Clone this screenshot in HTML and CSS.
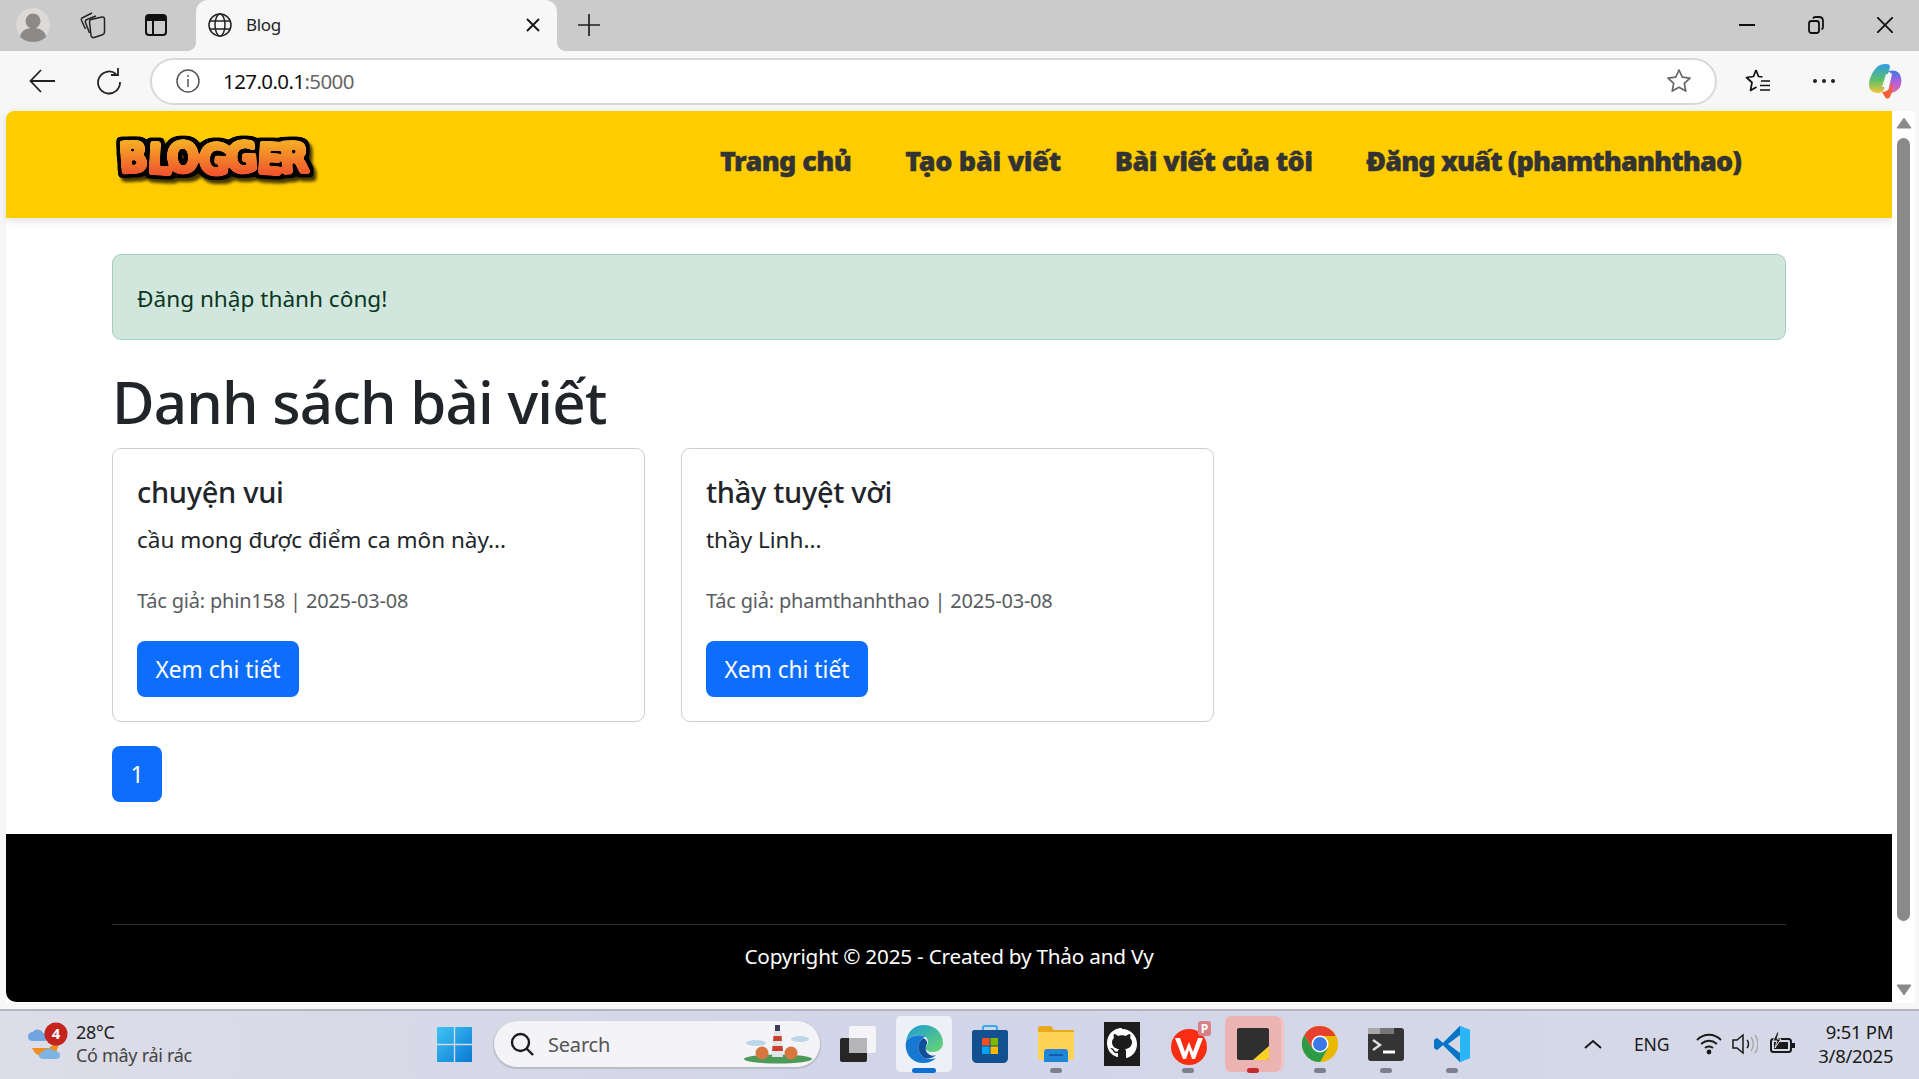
FILE: index.html
```html
<!DOCTYPE html>
<html lang="vi">

<head>
    <meta charset="UTF-8">
    <meta name="viewport" content="width=device-width, initial-scale=1.0">
    <title>Blog</title>
    <link rel="stylesheet" href="styles.css">
</head>

<body>
    <div class="tabstrip">
        <svg class="profile" width="34" height="34" viewBox="0 0 34 34">
            <circle cx="17" cy="17" r="17" fill="#dcdad8" />
            <circle cx="17" cy="13" r="7.5" fill="#8c8a88" />
            <path d="M4 29c1-7 7-9 13-9s12 2 13 9c-3 3-8 5-13 5s-10-2-13-5z" fill="#8c8a88" />
        </svg>
        <svg class="strip-icon" width="26" height="28" viewBox="0 0 26 28" fill="none" stroke="#222" stroke-width="1.5" stroke-linejoin="round">
            <path d="M11 8.500 22 6c1.500-.3 2.500.4 2.500 2v13c0 1.500-.6 2.300-2 2.700L14 26.500c-1.500.4-2.500-.3-3-1.800L9.500 11c0-1.500.3-2.200 1.500-2.500z" />
            <path d="M9.500 22 5.500 11.500c-.5-1.500 0-2.500 1.500-3L16 5" />
            <path d="M5.500 18 1.500 9.500C1 8 1.500 7 3 6.500L12 2" />
        </svg>
        <svg class="strip-icon" width="22" height="24" viewBox="0 0 22 24" fill="none" stroke="#111" stroke-width="2">
            <rect x="1" y="2" width="20" height="20" rx="3" />
            <path d="M1 5.500h20" stroke-width="5" />
            <path d="M8 8v14" />
        </svg>
        <div class="tab">
            <svg width="24" height="24" viewBox="0 0 24 24" fill="none" stroke="#222" stroke-width="1.500">
                <circle cx="12" cy="12" r="11" />
                <ellipse cx="12" cy="12" rx="5" ry="11" />
                <path d="M2 8h20M2 16h20" />
            </svg>
            <span class="tab-title">Blog</span>
            <svg class="tab-close" width="14" height="14" viewBox="0 0 14 14" stroke="#111" stroke-width="1.800">
                <path d="M1 1l12 12M13 1 1 13" />
            </svg>
        </div>
        <svg class="tab-plus" width="22" height="22" viewBox="0 0 22 22" stroke="#222" stroke-width="1.700">
            <path d="M11 0v22M0 11h22" />
        </svg>
        <div class="window-btns">
            <svg width="16" height="16" viewBox="0 0 16 16" stroke="#111" stroke-width="2">
                <path d="M0 8h16" />
            </svg>
            <svg width="16" height="18" viewBox="0 0 16 18" fill="none" stroke="#111" stroke-width="1.800">
                <rect x="1" y="5" width="10" height="12" rx="2.500" />
                <path d="M5 2.500C5.500 1.500 6.500 1 7.500 1H11c2.500 0 4 1.500 4 4v6c0 1-.5 2-1.500 2.500" />
            </svg>
            <svg width="16" height="16" viewBox="0 0 16 16" stroke="#111" stroke-width="1.800">
                <path d="M0 0l16 16M16 0 0 16" />
            </svg>
        </div>
    </div>

    <div class="toolbar">
        <svg class="tool-back" width="26" height="24" viewBox="0 0 26 24" fill="none" stroke="#222" stroke-width="1.800">
            <path d="M26 12H2M12 1 1.500 12 12 23" />
        </svg>
        <svg class="tool-reload" width="26" height="28" viewBox="0 0 26 28" fill="none" stroke="#222" stroke-width="1.800">
            <path d="M20 7a11 11 0 1 0 4 8" />
            <path d="M22 1v7h-7" />
        </svg>
        <div class="address">
            <svg width="24" height="24" viewBox="0 0 24 24" fill="none" stroke="#555" stroke-width="1.500">
                <circle cx="12" cy="12" r="11" />
                <path d="M12 10v8M12 6v2" />
            </svg>
            <span class="url">127.0.0.1<span class="url-port">:5000</span></span>
            <svg class="star" width="26" height="26" viewBox="0 0 26 26" fill="none" stroke="#666" stroke-width="1.700" stroke-linejoin="round">
                <path d="M13 2l3.300 7.200 7.700.9-5.700 5.300 1.500 7.700L13 19.300l-6.800 3.800 1.500-7.700L2 10.100l7.700-.9z" />
            </svg>
        </div>
        <svg class="tool-fav" width="26" height="26" viewBox="0 0 26 26" fill="none" stroke="#111" stroke-width="1.700" stroke-linejoin="round">
            <path d="M11 2l2.500 6.500 4 .5M11 2 8.500 8.500 1.500 9.500l5.500 5-1.500 8 6-3.500" />
            <path d="M16 13h9M15 17.500h10M15 22h10" />
        </svg>
        <div class="tool-more"><i></i><i></i><i></i></div>
        <svg class="tool-copilot" width="34" height="36" viewBox="0 0 34 36">
            <defs>
                <linearGradient id="copA" x1="0" y1="0" x2="0" y2="1">
                    <stop offset="0" stop-color="#2f9be8" />
                    <stop offset=".55" stop-color="#5cc06a" />
                    <stop offset="1" stop-color="#f2c53a" />
                </linearGradient>
                <linearGradient id="copB" x1="0" y1="0" x2="0" y2="1">
                    <stop offset="0" stop-color="#3a7be0" />
                    <stop offset=".5" stop-color="#b25ee0" />
                    <stop offset="1" stop-color="#e56a9c" />
                </linearGradient>
            </defs>
            <path d="M9 4c2-2 5-3 9-3 3 0 4 1 4 3L16 26c-1 3-3 4-6 4-5 0-9-3-9-8 0-7 4-14 8-18z" fill="url(#copA)" />
            <path d="M20 8c4-1 8-1 11 2 2 3 3 7 2 11-1 5-5 8-10 9l-3-1 4-18z" fill="url(#copB)" />
            <path d="M14 29c3 0 5-1 7-3l3-7c1 5 0 11-2 15-1 2-4 2-5 0z" fill="#f0603a" />
            <path d="M18 11l-4 13h3l4-13z" fill="#fff" opacity=".9" />
        </svg>
    </div>

    <div class="viewport">
        <div class="page">
            <nav class="topbar">
                <svg class="logo" width="216" height="64" viewBox="0 0 216 64">
                    <defs>
                        <linearGradient id="logoFill" gradientUnits="userSpaceOnUse" x1="0" y1="14" x2="0" y2="48">
                            <stop offset="0" stop-color="#f5ab25" />
                            <stop offset="1" stop-color="#f0502e" />
                        </linearGradient>
                        <filter id="logoBubble" x="-5%" y="-20%" width="110%" height="150%" color-interpolation-filters="sRGB">
                            <feGaussianBlur in="SourceGraphic" stdDeviation="1" result="soft" />
                            <feComponentTransfer in="soft" result="body">
                                <feFuncA type="linear" slope="6" intercept="-1.500" />
                            </feComponentTransfer>
                            <feMorphology in="body" operator="dilate" radius="2.600" result="fat" />
                            <feGaussianBlur in="fat" stdDeviation="0.800" result="fatSoft" />
                            <feColorMatrix in="fatSoft" type="matrix" values="0 0 0 0 0  0 0 0 0 0  0 0 0 0 0  0 0 0 5 -1.200" result="outline" />
                            <feOffset in="outline" dx="3" dy="4" result="moved" />
                            <feGaussianBlur in="moved" stdDeviation="1.600" result="blurred" />
                            <feColorMatrix in="blurred" type="matrix" values="0 0 0 0 .2  0 0 0 0 .16  0 0 0 0 0  0 0 0 .9 0" result="shadow" />
                            <feMerge>
                                <feMergeNode in="shadow" />
                                <feMergeNode in="outline" />
                                <feMergeNode in="body" />
                            </feMerge>
                        </filter>
                    </defs>
                    <text class="logo-text" x="9" y="45" rotate="-4 3 -3 4 -3 3 -2" fill="url(#logoFill)" stroke="url(#logoFill)" filter="url(#logoBubble)">BLOGGER</text>
                </svg>
                <div class="nav-links">
                    <a href="#">Trang chủ</a>
                    <a class="nav-wide" href="#">Tạo bài viết</a>
                    <a href="#">Bài viết của tôi</a>
                    <a class="nav-tight" href="#">Đăng xuất (phamthanhthao)</a>
                </div>
            </nav>

            <main class="container">
                <div class="alert">Đăng nhập thành công!</div>
                <h1>Danh sách bài viết</h1>
                <div class="cards">
                    <div class="card">
                        <h5>chuyện vui</h5>
                        <p class="card-text">cầu mong được điểm ca môn này...</p>
                        <p class="card-meta">Tác giả: phin158 | 2025-03-08</p>
                        <a class="btn" href="#">Xem chi tiết</a>
                    </div>
                    <div class="card">
                        <h5>thầy tuyệt vời</h5>
                        <p class="card-text">thầy Linh...</p>
                        <p class="card-meta">Tác giả: phamthanhthao | 2025-03-08</p>
                        <a class="btn" href="#">Xem chi tiết</a>
                    </div>
                </div>
                <a class="page-num" href="#">1</a>
            </main>

            <footer class="footer">
                <div class="footer-inner">Copyright © 2025 - Created by Thảo and Vy</div>
            </footer>
        </div>
        <div class="scrollbar">
            <svg width="16" height="12" viewBox="0 0 16 12"><path d="M8 1l7 10H1z" fill="#8a8a8a" stroke="#8a8a8a" stroke-linejoin="round" /></svg>
            <div class="scroll-thumb"></div>
            <svg width="16" height="12" viewBox="0 0 16 12"><path d="M8 11l7-10H1z" fill="#8a8a8a" stroke="#8a8a8a" stroke-linejoin="round" /></svg>
        </div>
    </div>

    <div class="taskbar">
        <div class="weather">
            <svg width="42" height="44" viewBox="0 0 42 44">
                <path d="M5 26c4 10 16 12 24 5l3-9-4-1-6 5z" fill="#ef8f22" />
                <path d="M1 15c0-3 2-5 5-5 1-3 8-4 10 1 3 0 5 2 5 4s-2 4-4 4H5c-2 0-4-2-4-4z" fill="#6fa6df" />
                <path d="M12 34c0-3 2-4 4-4 1-4 9-5 11-1 3 0 6 1 6 4s-2 4-5 4H16c-2 0-4-1-4-3z" fill="#7db4e6" />
                <circle cx="29" cy="12" r="11.500" fill="#c4241f" />
                <text class="weather-badge" x="29" y="17" text-anchor="middle">4</text>
            </svg>
            <div class="weather-text">
                <span class="temp">28°C</span>
                <span class="sky">Có mây rải rác</span>
            </div>
        </div>
        <svg class="win-logo" width="35" height="35" viewBox="0 0 35 35">
            <defs>
                <linearGradient id="winFill" x1="0" y1="0" x2="1" y2="1">
                    <stop offset="0" stop-color="#3ec5f2" />
                    <stop offset="1" stop-color="#0b78d6" />
                </linearGradient>
            </defs>
            <path d="M0 0h16.800v16.800H0zM18.200 0H35v16.800H18.200zM0 18.200h16.800V35H0zM18.200 18.200H35V35H18.200z" fill="url(#winFill)" />
        </svg>
        <div class="search">
            <svg width="24" height="24" viewBox="0 0 24 24" fill="none" stroke="#1a1a1a" stroke-width="2.400">
                <circle cx="10.500" cy="10.500" r="8.500" />
                <path d="M16.500 16.500 23 23" />
            </svg>
            <span class="search-label">Search</span>
            <svg class="search-art" width="72" height="40" viewBox="0 0 72 40">
                <ellipse cx="14" cy="19" rx="10" ry="3" fill="#bcd6ea" />
                <ellipse cx="58" cy="15" rx="9" ry="3" fill="#bcd6ea" />
                <ellipse cx="36" cy="35" rx="34" ry="4.500" fill="#4d9a58" />
                <circle cx="20" cy="29" r="6.500" fill="#d8763f" />
                <circle cx="49" cy="29" r="6.500" fill="#d8763f" />
                <path d="M32 7h7l2 26H30z" fill="#e3e3e8" />
                <path d="M31.500 12h8l.5 5h-9zM30.500 22h10l.5 5H30z" fill="#c8412f" />
                <path d="M33 1h5v6h-5z" fill="#3a3f58" />
            </svg>
        </div>
        <div class="apps">
            <div class="app">
                <svg width="36" height="36" viewBox="0 0 36 36">
                    <rect x="0" y="12" width="27" height="24" rx="2" fill="#262626" />
                    <rect x="9" y="0" width="27" height="27" rx="2" fill="#f4f4f8" />
                    <rect x="9" y="12" width="18" height="15" fill="#b5b5b8" />
                </svg>
            </div>
            <div class="app app-active">
                <svg width="38" height="38" viewBox="0 0 38 38">
                    <defs>
                        <linearGradient id="edgeTop" x1="0" y1="0" x2="1" y2="1">
                            <stop offset="0" stop-color="#1a9ad8" />
                            <stop offset="1" stop-color="#6bd86c" />
                        </linearGradient>
                    </defs>
                    <path d="M1 17C2 7 9 0 19 0c11 0 19 8 19 18 0 6-5 9-10 9-4 0-8-2-8-4 0-2 3-2 3-6s-4-7-8-7C8 10 2 13 1 17z" fill="url(#edgeTop)" />
                    <path d="M1 17c-2 11 6 21 17 21 5 0 9-1 13-5-6 2-11 1-14-2-5-5-5-13 1-18 1-1 2-2 3-2-8-2-18 0-20 6z" fill="#1778d2" />
                    <path d="M17 31c-5-5-5-13 1-18 3 1 5 4 4 6-3 4-1 9 3 11 2 1 4 1 6 0-4 4-10 5-14 1z" fill="#0f4f9c" />
                </svg>
                <i class="app-bar"></i>
            </div>
            <div class="app">
                <svg width="36" height="38" viewBox="0 0 36 38">
                    <path d="M11 6V3c0-1 1-2 2-2h10c1 0 2 1 2 2v3" fill="none" stroke="#38a8ea" stroke-width="2" />
                    <path d="M2 5h32c1 0 2 1 2 2v26c0 3-2 5-5 5H5c-3 0-5-2-5-5V7c0-1 1-2 2-2z" fill="#12508f" />
                    <path d="M10 13h7.500v7.500H10z" fill="#f25022" />
                    <path d="M18.500 13H26v7.500h-7.500z" fill="#7fba00" />
                    <path d="M10 21.500h7.500V29H10z" fill="#00a4ef" />
                    <path d="M18.500 21.500H26V29h-7.500z" fill="#ffb900" />
                </svg>
            </div>
            <div class="app">
                <svg width="36" height="36" viewBox="0 0 36 36">
                    <path d="M0 2c0-1 1-2 2-2h11l3 4h20v28H0z" fill="#e8a91c" />
                    <path d="M0 6h36v26c0 1-1 2-2 2H2c-1 0-2-1-2-2z" fill="#ffd355" />
                    <path d="M6 36V26c0-2 1-3 3-3h18c2 0 3 1 3 3v10z" fill="#1f86d8" />
                    <path d="M11 29h14" stroke="#0e5fa8" stroke-width="2" />
                </svg>
                <i class="app-dot"></i>
            </div>
            <div class="app">
                <svg width="36" height="44" viewBox="0 0 36 44">
                    <rect width="36" height="44" fill="#1d1c1c" />
                    <path d="M18 6C9 6 3 13 3 21c0 7 4 12 10 14 1 0 1-.5 1-1v-3c-4 1-5-2-5-2-1-2-2-2-2-2-1-1 0-1 0-1 2 0 3 2 3 2 1 2 3 2 4 1 0-1 1-2 1-2-3 0-7-2-7-7 0-2 1-3 2-4 0 0-1-2 0-4 0 0 2 0 4 2 2-1 6-1 8 0 2-2 4-2 4-2 1 2 0 4 0 4 1 1 2 2 2 4 0 5-4 7-7 7 1 1 1 2 1 3v5c0 .5 0 1 1 1 6-2 10-7 10-14 0-8-6-15-15-15z" fill="#fff" />
                </svg>
            </div>
            <div class="app app-wps">
                <svg width="40" height="46" viewBox="0 0 40 46">
                    <circle cx="18" cy="26" r="18" fill="#fa2d12" />
                    <path d="M4 17h5l5 14 4-10 4 10 5-14h5l-8 21h-3l-3-9-3 9h-3z" fill="#fff" />
                    <rect x="27" y="0" width="13" height="15" rx="3" fill="#d88088" />
                    <text class="wps-badge" x="33.500" y="12" text-anchor="middle">P</text>
                </svg>
                <i class="app-dot"></i>
            </div>
            <div class="app app-flagged">
                <svg width="32" height="32" viewBox="0 0 32 32">
                    <rect width="32" height="32" rx="2" fill="#2f2f2f" />
                    <path d="M32 18v12c0 1-1 2-2 2H16z" fill="#f8d326" />
                </svg>
                <i class="app-dot app-dot-red"></i>
            </div>
            <div class="app">
                <svg width="36" height="36" viewBox="0 0 36 36">
                    <circle cx="18" cy="18" r="18" fill="#e8b900" />
                    <path d="M18 0A18 18 0 0 0 2.400 9l7.800 13.500L18 10h15.600A18 18 0 0 0 18 0z" fill="#e8402e" />
                    <path d="M2.400 9A18 18 0 0 0 18 36l7.800-13.500-15.600 0z" fill="#2c9a47" />
                    <circle cx="18" cy="18" r="8.500" fill="#fff" />
                    <circle cx="18" cy="18" r="7" fill="#3a78e6" />
                </svg>
                <i class="app-dot"></i>
            </div>
            <div class="app">
                <svg width="36" height="33" viewBox="0 0 36 33">
                    <rect width="36" height="33" rx="3" fill="#343434" />
                    <path d="M0 3c0-2 1-3 3-3h9v6H0z" fill="#a8a8a8" />
                    <path d="M12 0h14v6H12z" fill="#777" />
                    <path d="M5 12l7 5-7 5" fill="none" stroke="#ddd" stroke-width="2.400" />
                    <path d="M15 24h12" stroke="#fff" stroke-width="3" />
                </svg>
                <i class="app-dot"></i>
            </div>
            <div class="app">
                <svg width="36" height="36" viewBox="0 0 36 36">
                    <path d="M26 0 9 17 3 12l-3 2v8l3 2 6-5 17 17 10-4V4z" fill="#1f9cf0" />
                    <path d="M26 0v36L9 19 3 24l-3-2v-8l3-2 6 5z" fill="#0a74c4" />
                    <path d="M26 9v18L14 18z" fill="#d5d8e6" />
                    <path d="M26 0l10 4v28l-10 4z" fill="#29b6f6" />
                </svg>
                <i class="app-dot"></i>
            </div>
        </div>
        <div class="tray">
            <svg width="18" height="10" viewBox="0 0 18 10" fill="none" stroke="#1a1a1a" stroke-width="2">
                <path d="M1 9l8-7 8 7" />
            </svg>
            <span class="lang">ENG</span>
            <svg class="tray-wifi" width="26" height="22" viewBox="0 0 26 22" fill="none" stroke="#1a1a1a" stroke-width="1.800">
                <path d="M1 7c7-7 17-7 24 0M5 11c5-4 11-4 16 0M9 15c2-2 6-2 8 0" />
                <circle cx="13" cy="19" r="1.500" fill="#1a1a1a" />
            </svg>
            <svg class="tray-sound" width="26" height="22" viewBox="0 0 26 22" fill="none" stroke="#1a1a1a" stroke-width="1.500">
                <path d="M1 7h4l6-5v18l-6-5H1z" />
                <path d="M15 7c2 2 2 6 0 8" />
                <path d="M19 4c3 4 3 10 0 14M23 2c4 5 4 13 0 18" stroke="#aaa" />
            </svg>
            <svg class="tray-battery" width="25" height="24" viewBox="0 0 25 24">
                <rect x="1" y="7" width="20" height="13" rx="2.500" fill="none" stroke="#1a1a1a" stroke-width="2" />
                <rect x="4" y="10" width="14" height="7" fill="#1a1a1a" />
                <rect x="22" y="11" width="3" height="5" fill="#1a1a1a" />
                <path d="M7 0 3 9h4l-2 7 6-9H7l2-7z" fill="#1a1a1a" stroke="#d5d8e6" />
            </svg>
            <div class="clock">
                <span>9:51 PM</span>
                <span>3/8/2025</span>
            </div>
        </div>
    </div>
</body>

</html>
```

FILE: styles.css
```css
* {
    box-sizing: border-box;
}

html,
body {
    margin: 0;
    height: 1079px;
    overflow: hidden;
}

body {
    display: flex;
    flex-direction: column;
    background-color: #f7f7f7;
    font-family: "Noto Sans", "Liberation Sans", sans-serif;
    color: #212529;
}

/* browser chrome */
.tabstrip {
    flex: none;
    display: flex;
    align-items: center;
    height: 51px;
    padding: 0 0 2px 16px;
    background-color: #cbcbcb;
}

.strip-icon {
    margin-left: 30px;
}

.strip-icon + .strip-icon {
    margin-left: 39px;
}

.tab {
    position: relative;
    display: flex;
    align-items: center;
    align-self: flex-end;
    width: 361px;
    height: 51px;
    margin: 0 0 -2px 29px;
    padding: 0 17px 2px 12px;
    background-color: #f7f7f7;
    border-radius: 12px 12px 0 0;
}

.tab::before,
.tab::after {
    content: "";
    position: absolute;
    bottom: 0;
    width: 8px;
    height: 8px;
}

.tab::before {
    left: -8px;
    background: radial-gradient(circle at 0 0, #cbcbcb 7.5px, #f7f7f7 8px);
}

.tab::after {
    right: -8px;
    background: radial-gradient(circle at 100% 0, #cbcbcb 7.5px, #f7f7f7 8px);
}

.tab-title {
    margin-left: 14px;
    font-size: 17px;
    letter-spacing: -0.3px;
    color: #222;
}

.tab-close {
    margin-left: auto;
}

.tab-plus {
    margin-left: 21px;
}

.window-btns {
    display: flex;
    align-items: center;
    gap: 53px;
    margin-left: auto;
    padding-right: 26px;
}

.toolbar {
    flex: none;
    display: flex;
    align-items: center;
    height: 60px;
    padding-left: 29px;
    background-color: #f7f7f7;
}

.tool-reload {
    margin-left: 41px;
}

.address {
    display: flex;
    align-items: center;
    width: 1567px;
    height: 47px;
    margin-left: 28px;
    padding: 0 23px 0 24px;
    background-color: #fff;
    border: 2px solid #d8d8d6;
    border-radius: 24px;
}

.url {
    margin-left: 23px;
    font-size: 20.500px;
    letter-spacing: -0.6px;
    color: #111;
}

.url-port {
    color: #666;
}

.star {
    margin-left: auto;
}

.tool-fav {
    margin-left: 28px;
}

.tool-more {
    display: flex;
    gap: 5px;
    margin-left: 42px;
}

.tool-more i {
    width: 4px;
    height: 4px;
    border-radius: 50%;
    background-color: #222;
}

.tool-copilot {
    margin-left: 33px;
}

.viewport {
    flex: none;
    display: flex;
    height: 892px;
    margin-left: 6px;
    margin-right: 4px;
    padding-bottom: 1px;
    background-color: #fff;
    border-radius: 8px 8px 0 0;
}

/* the page itself */
.page {
    width: 1886px;
    display: flex;
    flex-direction: column;
    background-color: #fff;
}

.topbar {
    flex: none;
    display: flex;
    align-items: center;
    height: 107px;
    padding: 0 151px 0 105px;
    background-color: #ffcc00;
    border-top-left-radius: 8px;
    box-shadow: 0 3px 8px rgba(0, 0, 0, 0.12);
}

.logo {
    margin-bottom: 9px;
}

.logo-text {
    font-family: "DejaVu Sans Condensed", "DejaVu Sans", sans-serif;
    font-weight: bold;
    font-size: 42px;
    letter-spacing: -1.8px;
    stroke-width: 2.500px;
    stroke-linejoin: round;
}

.nav-links {
    display: flex;
    gap: 54px;
    margin-bottom: 8px;
    margin-left: auto;
}

.nav-links a {
    font-size: 27px;
    font-weight: 900;
    letter-spacing: -0.6px;
    color: #333;
    text-decoration: none;
    -webkit-text-stroke: 0.4px #333;
}

.nav-links .nav-wide {
    letter-spacing: -0.3px;
}

.nav-links .nav-tight {
    letter-spacing: -0.9px;
}

.container {
    flex: 1;
    margin: 0 106px;
    padding-top: 36px;
}

.alert {
    height: 86px;
    padding: 2px 24px 0;
    display: flex;
    align-items: center;
    font-size: 22.600px;
    color: #0a3622;
    background-color: #d1e7dd;
    border: 1px solid #a3cfbb;
    border-radius: 9px;
}

h1 {
    margin: 27px 0 11px;
    font-size: 58.300px;
    font-weight: 500;
    line-height: 70px;
    letter-spacing: -0.8px;
}

.cards {
    display: grid;
    grid-template-columns: repeat(3, 533px);
    column-gap: 36px;
}

.card {
    height: 274px;
    padding: 25px 24px;
    background-color: #fff;
    border: 1px solid #cfcfcf;
    border-radius: 9px;
}

h5 {
    margin: 0;
    font-size: 29px;
    font-weight: 500;
    line-height: 36px;
    letter-spacing: -0.3px;
}

.card-text {
    margin: 12px 0 0;
    font-size: 22.500px;
    line-height: 36px;
}

.card-meta {
    margin: 25px 0 0;
    font-size: 20px;
    line-height: 36px;
    letter-spacing: -0.2px;
    color: #595c5f;
}

.btn {
    display: inline-block;
    height: 56px;
    margin-top: 22px;
    padding: 0 18.500px;
    font-size: 22.700px;
    line-height: 58px;
    color: #fff;
    background-color: #0d6efd;
    border-radius: 8px;
    text-decoration: none;
}

.page-num {
    display: block;
    width: 50px;
    height: 56px;
    margin-top: 24px;
    font-size: 23px;
    line-height: 56px;
    text-align: center;
    color: #fff;
    background-color: #0d6efd;
    border-radius: 8px;
    text-decoration: none;
}

.footer {
    flex: none;
    height: 168px;
    padding: 90px 106px 0;
    background-color: #000;
    border-bottom-left-radius: 10px;
}

.footer-inner {
    padding-top: 16px;
    font-size: 20.700px;
    line-height: 30px;
    letter-spacing: -0.2px;
    text-align: center;
    color: #fff;
    border-top: 1px solid #333;
}

.scrollbar {
    width: 23px;
    display: flex;
    flex-direction: column;
    align-items: center;
    padding-top: 6px;
    background-color: #fff;
}

.scroll-thumb {
    flex: none;
    width: 13px;
    height: 783px;
    margin: 9px 0 63px;
    background-color: #8a8a8a;
    border-radius: 7px;
}

/* windows taskbar */
.taskbar {
    flex: none;
    display: flex;
    align-items: center;
    height: 70px;
    margin-top: auto;
    padding: 0 0 2px 27px;
    background: linear-gradient(90deg, #dcdde8, #d2d5e8 45%, #d6d9e7);
    border-top: 2px solid #b4b5c0;
}

.weather {
    display: flex;
    align-items: center;
    gap: 7px;
    width: 410px;
    color: #222;
}

.weather-badge {
    font-size: 15px;
    font-weight: bold;
    fill: #fff;
}

.weather-text {
    display: flex;
    flex-direction: column;
    font-size: 18px;
    line-height: 23.500px;
    letter-spacing: -0.3px;
}

.sky {
    color: #444;
}

.search {
    display: flex;
    align-items: center;
    width: 326px;
    height: 46px;
    margin-left: 22px;
    padding: 0 6px 0 16px;
    background-color: #f3f3f8;
    border-radius: 23px;
    box-shadow: 0 1px 1px 1px #b9bac6;
}

.search-label {
    margin-left: 14px;
    font-size: 20px;
    letter-spacing: -0.2px;
    color: #555;
}

.search-art {
    margin-left: auto;
}

.apps {
    display: flex;
    margin-left: 5px;
}

.app {
    position: relative;
    display: flex;
    align-items: center;
    justify-content: center;
    width: 66px;
    height: 56px;
}

.app-active {
    width: 56px;
    margin: 0 5px;
    background-color: #eef0f8;
    border-radius: 5px;
}

.app-wps svg {
    margin-left: 6px;
}

.app-flagged {
    width: 56px;
    margin: 0 6px 0 4px;
    background-color: #ebb3b2;
    border-radius: 6px;
    box-shadow: 4px 0 0 -1px #f0c4c4;
}

.app-bar,
.app-dot {
    position: absolute;
    left: 50%;
    bottom: -1px;
    width: 12px;
    height: 5px;
    margin-left: -6px;
    background-color: #7d808c;
    border-radius: 3px;
}

.app-bar {
    width: 24px;
    margin-left: -12px;
    background-color: #0f6fd0;
}

.app-dot-red {
    background-color: #c42b2b;
}

.wps-badge {
    font-size: 12px;
    font-weight: bold;
    fill: #fff;
}

.tray {
    display: flex;
    align-items: center;
    margin-left: 99px;
    color: #1a1a1a;
}

.lang {
    margin-left: 32px;
    font-size: 17.500px;
    letter-spacing: -0.2px;
}

.tray-wifi {
    margin-left: 27px;
}

.tray-sound {
    margin-left: 10px;
}

.tray-battery {
    margin-left: 12px;
}

.clock {
    display: flex;
    flex-direction: column;
    align-items: flex-end;
    width: 98px;
    font-size: 18.500px;
    line-height: 24px;
    letter-spacing: -0.3px;
}
```
